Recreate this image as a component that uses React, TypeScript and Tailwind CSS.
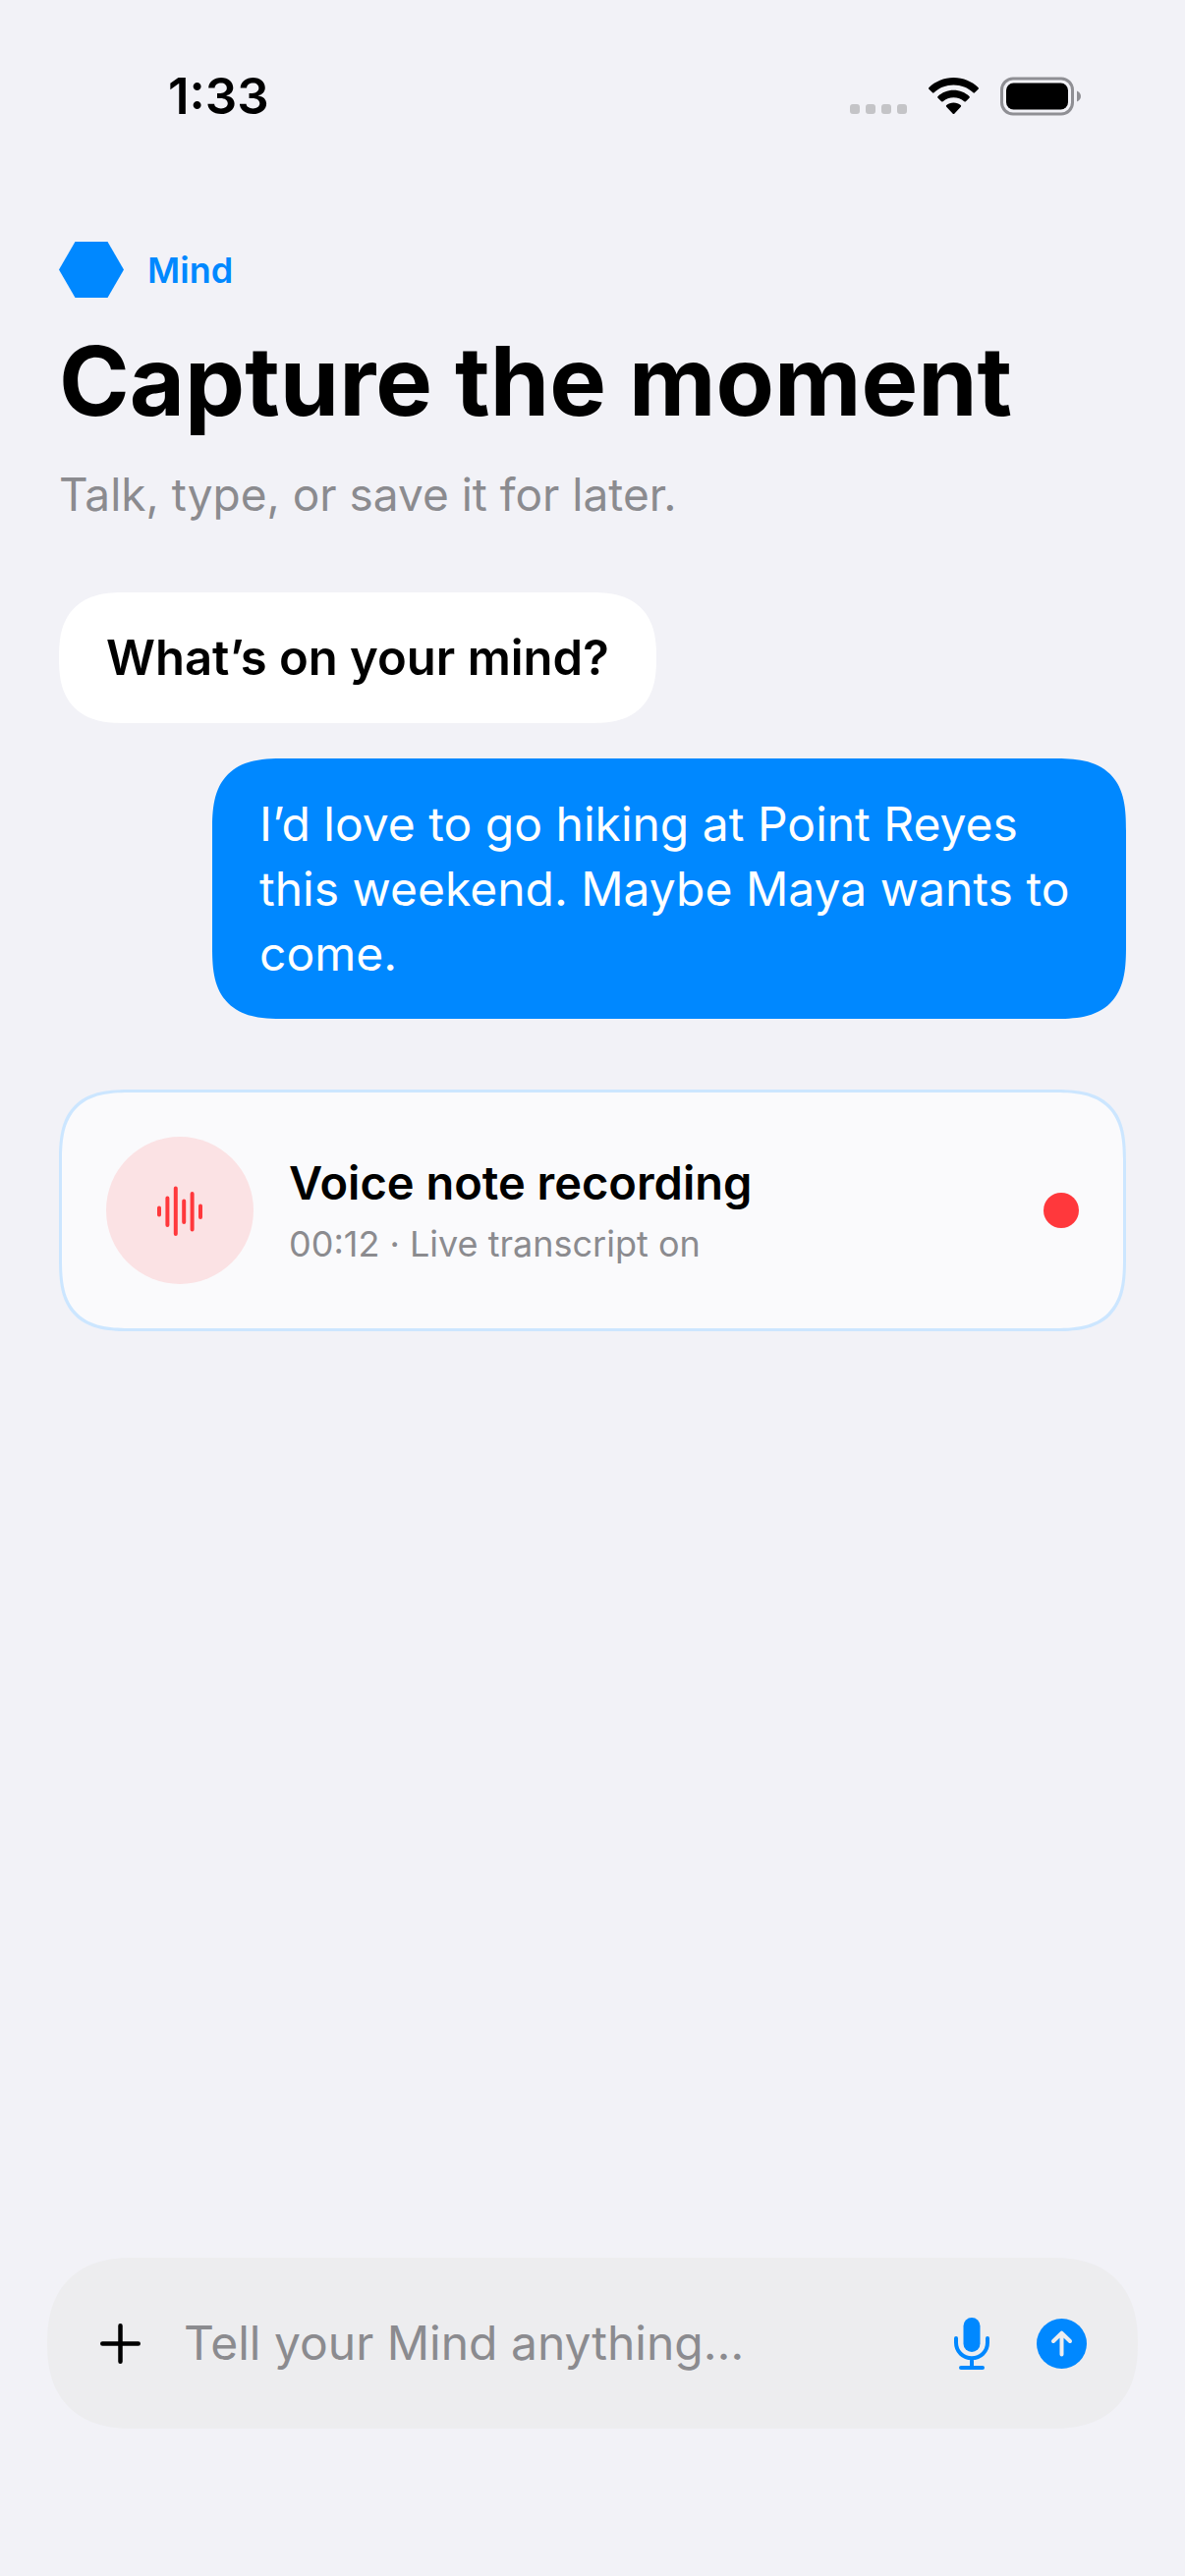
import { useState } from "react";

function StatusBar() {
  return (
    <div className="flex h-[246px] items-start justify-between pt-[67px] pr-[106px] pl-[171px]">
      <span className="text-[51px] leading-[62px] font-semibold">1:33</span>
      <div className="flex h-[62px] items-center gap-[22px]">
        {/* Cellular, no service */}
        <svg width="58" height="40" viewBox="0 0 58 40" fill="#c4c4c7" aria-hidden="true">
          <rect x="0" y="28" width="10" height="10" rx="3" />
          <rect x="16" y="28" width="10" height="10" rx="3" />
          <rect x="32" y="28" width="10" height="10" rx="3" />
          <rect x="48" y="28" width="10" height="10" rx="3" />
        </svg>

        {/* Wifi */}
        <svg width="51" height="38" viewBox="0 0 51 38" fill="black" aria-hidden="true">
          <path d="M25.5 0C35.3 0 44.2 3.800 50.500 10.100C51.100 10.700 51.100 11.300 50.600 11.800L47 15.300C46.500 15.800 45.900 15.800 45.400 15.300C40.100 10.400 33.100 7.600 25.500 7.600C17.900 7.600 10.900 10.400 5.600 15.300C5.100 15.800 4.500 15.800 4 15.300L.4 11.800C-.1 11.300-.1 10.700.5 10.100C6.800 3.800 15.700 0 25.500 0Z" />
          <path d="M25.500 12.800C31.700 12.800 37.300 15.200 41.400 19C42 19.600 42 20.100 41.500 20.700L37.900 24.200C37.400 24.700 36.900 24.700 36.300 24.200C33.400 21.700 29.600 20.200 25.500 20.200C21.400 20.200 17.600 21.700 14.700 24.200C14.100 24.700 13.600 24.700 13.100 24.200L9.500 20.700C9 20.100 9 19.600 9.600 19C13.700 15.200 19.300 12.800 25.500 12.800Z" />
          <path d="M25.500 25.600C28.300 25.600 30.900 26.600 32.700 28.100C33.300 28.600 33.300 29.200 32.800 29.700L26.500 36.500C25.900 37.200 25.100 37.200 24.500 36.500L18.200 29.700C17.700 29.200 17.700 28.600 18.300 28.100C20.100 26.600 22.700 25.600 25.500 25.600Z" />
        </svg>

        {/* Battery */}
        <svg width="82" height="40" viewBox="0 0 82 40" aria-hidden="true">
          <rect x="1.500" y="2" width="72" height="36" rx="11.500" fill="none" stroke="#8f8f94" strokeWidth="3" />
          <rect x="6" y="6.500" width="63" height="27" rx="7.500" fill="black" />
          <path d="M78 14.500C80.500 15.500 82 17.600 82 20C82 22.400 80.500 24.500 78 25.500Z" fill="#8f8f94" />
        </svg>
      </div>
    </div>
  );
}

function VoiceNoteCard() {
  return (
    <section className="mt-[72px] flex items-center gap-9 rounded-[74px] border-3 border-[#cce6ff] bg-[#fafafc] p-[45px] [corner-shape:superellipse(1.5)]">
      <div className="flex size-[150px] shrink-0 items-center justify-center rounded-full bg-[#fbe2e4]">
        <svg width="46" height="52" viewBox="0 0 46 52" stroke="#ff383c" strokeWidth="4" strokeLinecap="round" aria-hidden="true">
          <path d="M2 23.500V30.500M10.400 13.500V41M18.800 3.500V50M27.200 16.500V38M35.600 9V45.500M44 21.500V33" />
        </svg>
      </div>
      <div className="flex-1">
        <h2 className="text-[47px] leading-[60px] font-semibold">Voice note recording</h2>
        <p className="mt-2 text-[36px] leading-[48px] text-[#8b8b8f]">00:12 · Live transcript on</p>
      </div>
      <span className="size-9 shrink-0 rounded-full bg-[#ff383c]" />
    </section>
  );
}

function Composer() {
  const [text, setText] = useState("");

  return (
    <form
      onSubmit={(e) => e.preventDefault()}
      className="mx-12 mb-[150px] flex h-[174px] items-center rounded-[87px] bg-[#ededef] pr-[52px] pl-[54px] [corner-shape:superellipse(1.25)]"
    >
      <button type="button" aria-label="Add attachment" className="shrink-0">
        <svg width="41" height="41" viewBox="0 0 41 41" stroke="black" strokeWidth="4.500" strokeLinecap="round">
          <path d="M20.500 2.250V38.750M2.250 20.500H38.750" />
        </svg>
      </button>
      <input
        type="text"
        aria-label="Message"
        value={text}
        onChange={(e) => setText(e.target.value)}
        placeholder="Tell your Mind anything…"
        className="ml-11 min-w-0 flex-1 bg-transparent text-[48px] leading-[66px] outline-none placeholder:text-[#8b8b8f]"
      />
      <button type="button" aria-label="Dictate" className="shrink-0">
        <svg width="36" height="53" viewBox="0 0 36 53" fill="none" stroke="#0088ff" strokeWidth="4" strokeLinecap="round">
          <rect x="9.500" y="0" width="17" height="35" rx="8.500" fill="#0088ff" stroke="none" />
          <path d="M2 21V25.500C2 34.500 9 41.200 18 41.200C27 41.200 34 34.500 34 25.500V21M18 41.200V51M7 51H29" />
        </svg>
      </button>
      <button type="submit" aria-label="Send" className="ml-12 shrink-0">
        <svg width="51" height="51" viewBox="0 0 51 51" fill="none">
          <circle cx="25.500" cy="25.500" r="25.500" fill="#0088ff" />
          <path d="M25.500 36.500V15M17 23L25.500 14.700L34 23" stroke="#ededef" strokeWidth="4" strokeLinecap="round" strokeLinejoin="round" />
        </svg>
      </button>
    </form>
  );
}

export default function App() {
  return (
    <div className="flex min-h-screen flex-col bg-[#f2f2f7] font-[Inter,'Liberation_Sans',sans-serif] text-black">
      <StatusBar />

      <main className="flex flex-1 flex-col px-[60px]">
        {/* Heading */}
        <header>
          <div className="flex items-center gap-6">
            <svg width="66" height="57" viewBox="0 0 66 57" fill="#0088ff" aria-hidden="true">
              <path d="M16.500 0H49.500L66 28.500L49.500 57H16.500L0 28.500Z" />
            </svg>
            <span className="text-[36px] leading-[48px] font-semibold text-[#0088ff]">Mind</span>
          </div>
          <h1 className="mt-6 text-[97px] leading-[122px] font-bold">Capture the moment</h1>
          <p className="mt-6 text-[46px] leading-[60px] text-[#8b8b8f]">Talk, type, or save it for later.</p>
        </header>

        {/* Conversation */}
        <div className="mt-[70px] flex flex-col gap-9">
          <p className="self-start rounded-[66px] bg-white px-12 pt-[34px] pb-[33px] text-[49px] leading-[66px] font-semibold [corner-shape:superellipse(1.35)]">
            What’s on your mind?
          </p>
          <p className="ml-[156px] self-end rounded-[74px] bg-[#0088ff] px-12 pt-[34px] pb-[33px] text-[48px] leading-[66px] text-white [corner-shape:superellipse(1.5)]">
            I’d love to go hiking at Point Reyes this weekend. Maybe Maya wants to come.
          </p>
        </div>

        <VoiceNoteCard />
      </main>

      <Composer />
    </div>
  );
}
